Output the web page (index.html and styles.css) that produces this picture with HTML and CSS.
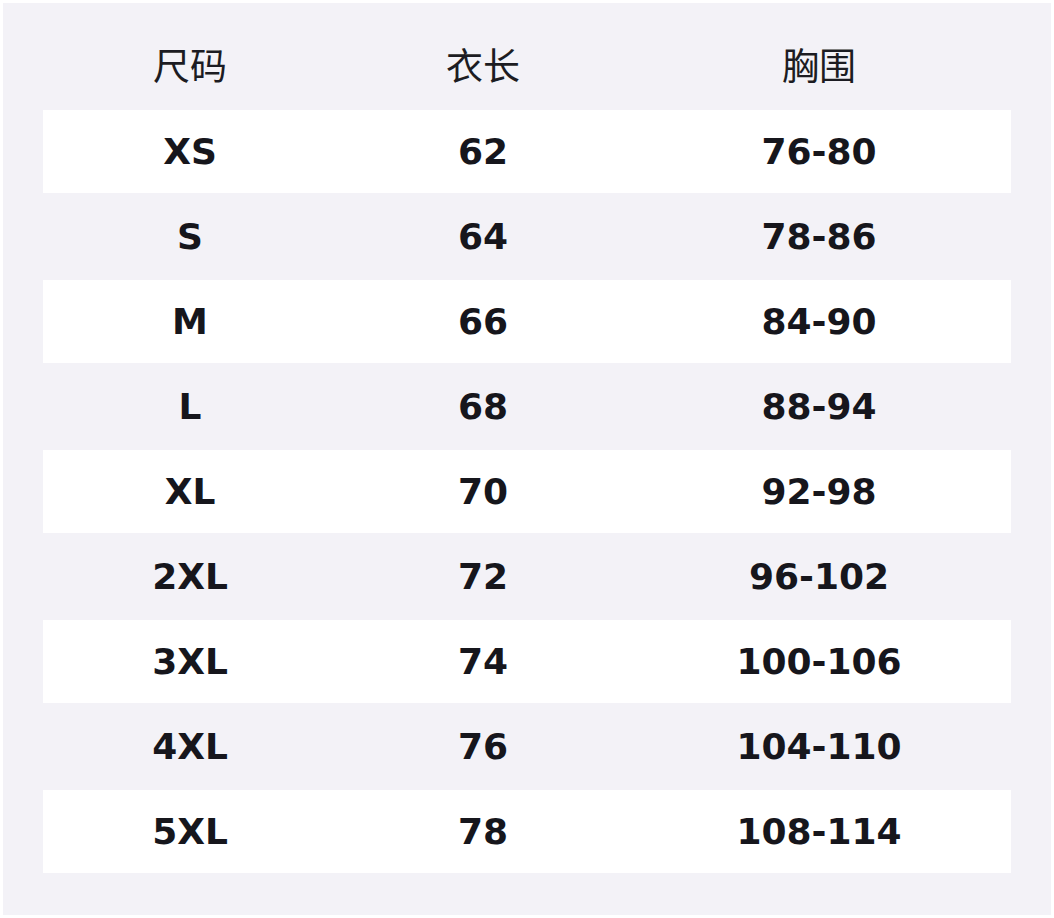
FILE: index.html
```html
<!DOCTYPE html>
<html lang="zh">
<head>
<meta charset="utf-8">
<title>尺码表</title>
<link rel="stylesheet" href="styles.css">
</head>
<body>
<div class="page">
  <div class="panel">
    <div class="row head"><div>尺码</div><div>衣长</div><div>胸围</div></div>
    <div class="row odd"><div>XS</div><div>62</div><div>76-80</div></div>
    <div class="row"><div>S</div><div>64</div><div>78-86</div></div>
    <div class="row odd"><div>M</div><div>66</div><div>84-90</div></div>
    <div class="row"><div>L</div><div>68</div><div>88-94</div></div>
    <div class="row odd"><div>XL</div><div>70</div><div>92-98</div></div>
    <div class="row"><div>2XL</div><div>72</div><div>96-102</div></div>
    <div class="row odd"><div>3XL</div><div>74</div><div>100-106</div></div>
    <div class="row"><div>4XL</div><div>76</div><div>104-110</div></div>
    <div class="row odd"><div>5XL</div><div>78</div><div>108-114</div></div>
  </div>
</div>
</body>
</html>
```
FILE: styles.css
```css
html, body { margin: 0; padding: 0; background: #ffffff; }
.page { padding: 3px; }
.panel {
  width: 968px;
  height: 832px;
  background: #f3f2f7;
  padding: 40px 40px 40px 40px;
  display: flex;
  flex-direction: column;
  gap: 2px;
}
.row {
  display: grid;
  grid-template-columns: 294px 292px 1fr;
  height: 83px;
  align-items: center;
  text-align: center;
  font-family: "DejaVu Sans", "Noto Sans CJK SC", sans-serif;
  font-weight: bold;
  font-size: 36px;
  color: #16161c;
}
.row > div:nth-child(3) { padding-right: 2px; }
.row.odd { background: #ffffff; }
.row.head {
  height: 65px;
  align-items: start;
  font-family: "Noto Sans CJK SC", sans-serif;
  font-weight: normal;
  font-size: 37px;
  line-height: 42px;
  color: #1c1c22;
}
```
